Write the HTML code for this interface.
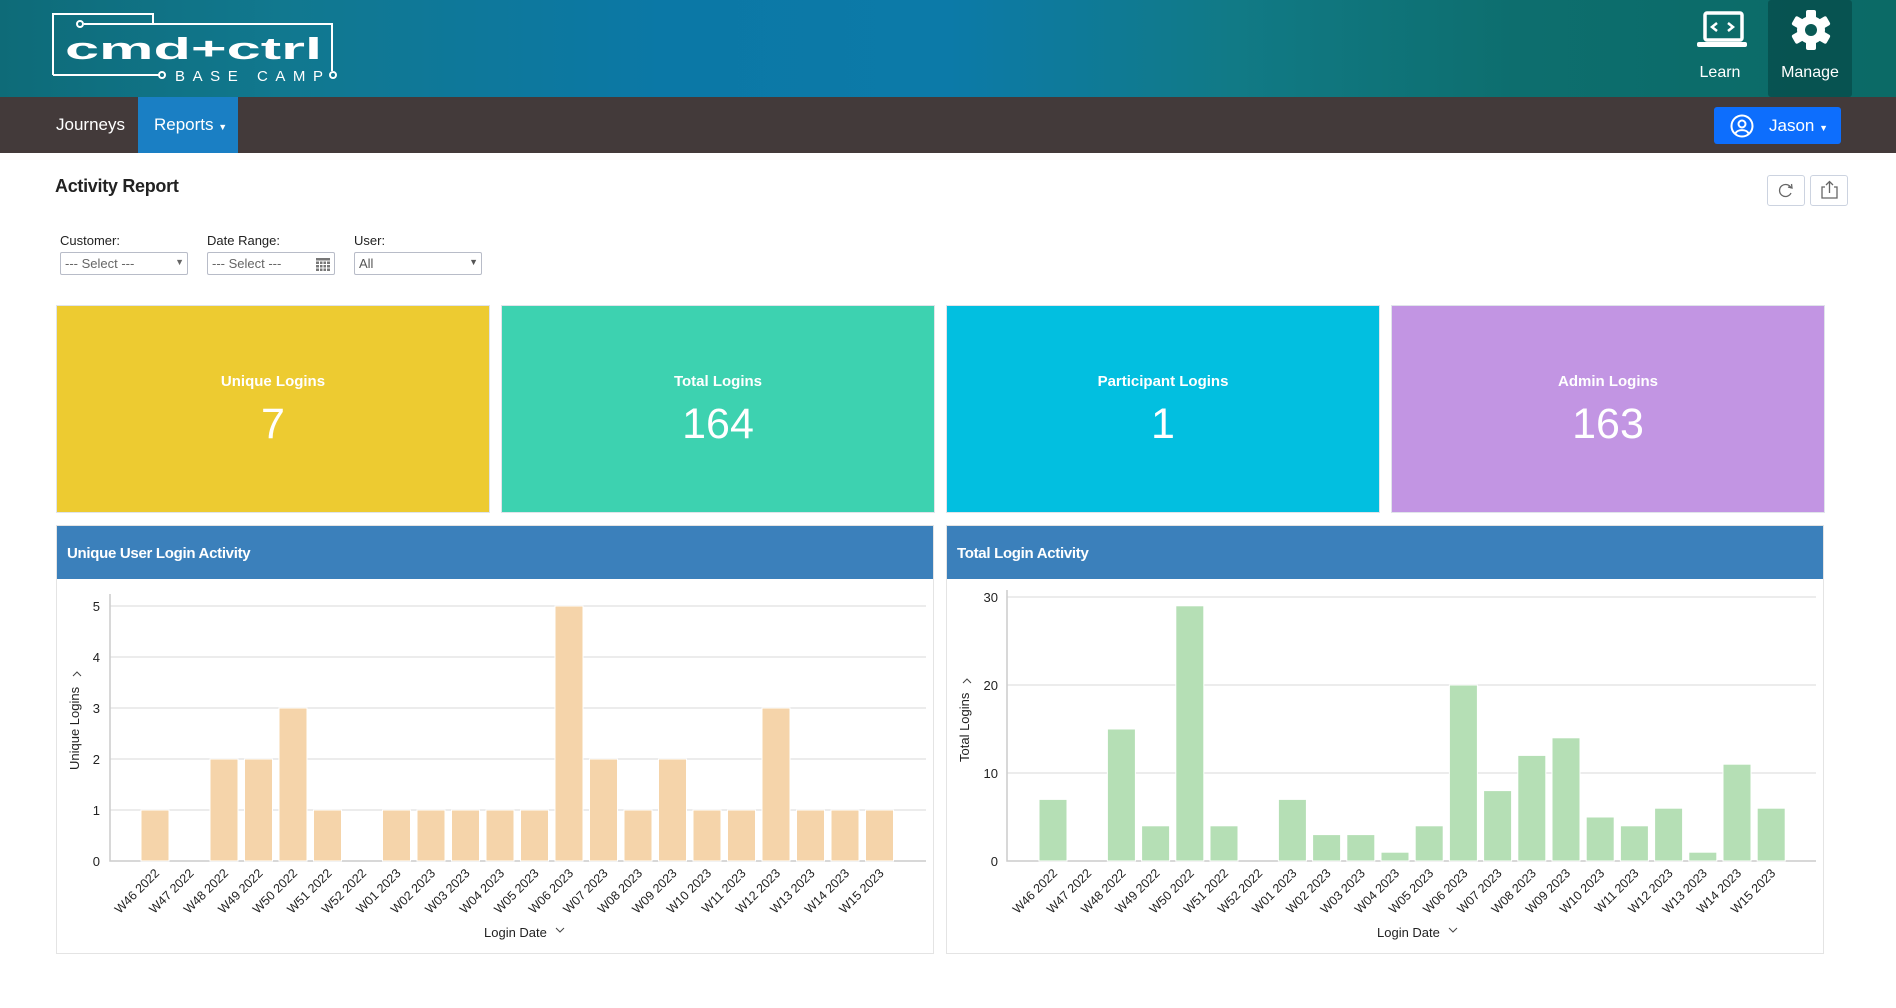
<!DOCTYPE html>
<html><head><meta charset="utf-8"><style>
*{margin:0;padding:0;box-sizing:border-box}
body{width:1896px;height:1008px;overflow:hidden;background:#fff;font-family:"Liberation Sans",sans-serif;position:relative;color:#222}
.abs{position:absolute}
#hdr{left:0;top:0;width:1896px;height:97px;background:linear-gradient(90deg,#0e6b78 0%,#11788f 15%,#0b78a6 35%,#0c7aa8 50%,#117a86 65%,#0d6e6e 80%,#0b6a66 100%)}
#nav{left:0;top:97px;width:1896px;height:56px;background:#433a3a}
.navt{color:#fff;font-size:17px;top:115px}
.card{top:305px;height:208px;width:434px;color:#fff;text-align:center;border:1px solid #e0e4ea}
.card .t{font-size:15px;font-weight:bold;margin-top:67px}
.card .n{font-size:43px;margin-top:10px}
.panel{top:525px;height:429px;width:878px;border:1px solid #e4e4e4}
.panel .h{height:53px;background:#3b80bb;color:#fff;font-weight:bold;font-size:15px;padding:19px 10px;letter-spacing:-0.3px}
.lbl{font-size:13px;color:#222;top:233px}
.sel{top:252px;height:23px;width:95px;border:1px solid #b8bcc8;border-radius:2px;font-size:13px;color:#666;padding:3px 4px}
</style></head><body>
<div id="hdr" class="abs"></div>
<div class="abs" style="left:1768px;top:0;width:84px;height:97px;background:rgba(0,40,40,0.35);border-radius:3px"></div>
<svg class="abs" style="left:0;top:0" width="1896" height="97">
<g fill="none" stroke="#fff" stroke-width="2">
<path d="M53 75 V14 H153 V24"/>
<path d="M84 24 H332 V71"/>
<circle cx="80" cy="24" r="3"/>
<path d="M53 75 H159"/><circle cx="162" cy="75" r="3"/>
<circle cx="333" cy="75" r="3"/>
</g>
<text x="65" y="59" fill="#fff" font-size="31" font-family="Liberation Sans" font-weight="bold" textLength="257" lengthAdjust="spacingAndGlyphs">cmd+ctrl</text>
<text x="175" y="81" fill="#fff" font-size="15" font-family="Liberation Sans" textLength="148" lengthAdjust="spacing">BASE CAMP</text>
<g fill="none" stroke="#fff" stroke-width="3.5"><rect x="1705" y="13" width="37" height="27" rx="2"/></g>
<rect x="1697" y="42" width="50" height="5" rx="2" fill="#fff"/>
<path d="M1717 23 l-5 4 5 4 M1728 23 l5 4 -5 4" stroke="#fff" stroke-width="2.5" fill="none"/>
<g transform="translate(1811,30)" fill="#fff">
<circle r="14"/>
<g id="tooth"><rect x="-5" y="-20" width="10" height="10" rx="2"/></g>
<use href="#tooth" transform="rotate(60)"/><use href="#tooth" transform="rotate(120)"/><use href="#tooth" transform="rotate(180)"/><use href="#tooth" transform="rotate(240)"/><use href="#tooth" transform="rotate(300)"/>
<circle r="6" fill="#0a5a55"/>
</g>
<text x="1720" y="77" fill="#fff" font-size="16" text-anchor="middle" font-family="Liberation Sans">Learn</text>
<text x="1810" y="77" fill="#fff" font-size="16" text-anchor="middle" font-family="Liberation Sans">Manage</text>
</svg>
<div id="nav" class="abs"></div>
<div class="abs" style="left:138px;top:97px;width:100px;height:56px;background:#1a7fc4"></div>
<div class="abs navt" style="left:56px">Journeys</div>
<div class="abs navt" style="left:154px">Reports <span style="font-size:9px">▼</span></div>
<div class="abs" style="left:1714px;top:107px;width:127px;height:37px;background:#0d6efd;border-radius:3px;color:#fff;font-size:17px">
<svg class="abs" style="left:16px;top:7px" width="24" height="24"><circle cx="12" cy="12" r="10.5" fill="none" stroke="#fff" stroke-width="2"/><circle cx="12" cy="10" r="3.5" fill="none" stroke="#fff" stroke-width="2"/><path d="M5.5 19.5 C7 15 17 15 18.5 19.5" fill="none" stroke="#fff" stroke-width="2"/></svg>
<span class="abs" style="left:55px;top:9px">Jason <span style="font-size:9px">▼</span></span></div>
<div class="abs" style="left:55px;top:176px;font-size:18px;font-weight:bold;letter-spacing:-0.3px">Activity Report</div>
<div class="abs" style="left:1767px;top:175px;width:38px;height:31px;border:1px solid #ccd3e0;border-radius:3px"><svg width="36" height="29"><path d="M23 12 A6 6 0 1 0 23 17" fill="none" stroke="#666" stroke-width="1.3"/><path d="M20 11 L24 12 L23.5 8" fill="none" stroke="#666" stroke-width="1.3"/></svg></div>
<div class="abs" style="left:1810px;top:175px;width:38px;height:31px;border:1px solid #ccd3e0;border-radius:3px"><svg width="36" height="29"><path d="M14 11 H11 V22 H26 V11 H23 M18.5 17 V6 M15 9 L18.5 5.5 L22 9" fill="none" stroke="#666" stroke-width="1.3"/></svg></div>
<div class="abs lbl" style="left:60px">Customer:</div>
<div class="abs lbl" style="left:207px">Date Range:</div>
<div class="abs lbl" style="left:354px">User:</div>
<div class="abs sel" style="left:60px;width:128px">--- Select ---<span class="abs" style="right:3px;top:4px;font-size:9px">▼</span></div>
<div class="abs sel" style="left:207px;width:128px">--- Select ---<svg class="abs" style="right:4px;top:3px" width="14" height="15"><rect x="0" y="2" width="14" height="13" fill="#777"/><path d="M0 5H14M3.5 5V15M7 5V15M10.5 5V15M0 8.5H14M0 12H14" stroke="#fff" stroke-width="1"/></svg></div>
<div class="abs sel" style="left:354px;width:128px;color:#555">All<span class="abs" style="right:3px;top:4px;font-size:9px">▼</span></div>
<div class="abs card" style="left:56px;background:#edcb31"><div class="t">Unique Logins</div><div class="n">7</div></div>
<div class="abs card" style="left:501px;background:#3dd2b0"><div class="t">Total Logins</div><div class="n">164</div></div>
<div class="abs card" style="left:946px;background:#02bfe0"><div class="t">Participant Logins</div><div class="n">1</div></div>
<div class="abs card" style="left:1391px;background:#c295e3"><div class="t">Admin Logins</div><div class="n">163</div></div>
<div class="abs panel" style="left:56px"><div class="h">Unique User Login Activity</div></div>
<div class="abs panel" style="left:946px"><div class="h">Total Login Activity</div></div>
<svg class="abs" style="left:0;top:0" width="1896" height="1008" font-family="Liberation Sans">
<g stroke="#e6e6e6" stroke-width="1.5" fill="none">
<path d="M110 606H926M110 657H926M110 708H926M110 759H926M110 810H926"/>
<path d="M1007 597H1816M1007 685H1816M1007 773H1816"/>
</g>
<g stroke="#ccc" stroke-width="1.5" fill="none"><path d="M110 594V861H926M1007 590V861H1816"/></g>
<g font-size="13" fill="#222" text-anchor="end">
<text x="100" y="611">5</text><text x="100" y="662">4</text><text x="100" y="713">3</text><text x="100" y="764">2</text><text x="100" y="815">1</text><text x="100" y="866">0</text>
<text x="998" y="602">30</text><text x="998" y="690">20</text><text x="998" y="778">10</text><text x="998" y="866">0</text>
</g>
<g transform="translate(0,861) scale(1,-1)" fill="#f5d4aa" stroke="#fff">
<rect x="141" width="28" height="51"/><rect x="210" width="28" height="102"/><rect x="244.5" width="28" height="102"/><rect x="279" width="28" height="153"/><rect x="313.5" width="28" height="51"/><rect x="382.5" width="28" height="51"/><rect x="417" width="28" height="51"/><rect x="451.5" width="28" height="51"/><rect x="486" width="28" height="51"/><rect x="520.5" width="28" height="51"/><rect x="555" width="28" height="255"/><rect x="589.5" width="28" height="102"/><rect x="624" width="28" height="51"/><rect x="658.5" width="28" height="102"/><rect x="693" width="28" height="51"/><rect x="727.5" width="28" height="51"/><rect x="762" width="28" height="153"/><rect x="796.5" width="28" height="51"/><rect x="831" width="28" height="51"/><rect x="865.5" width="28" height="51"/>
</g>
<g transform="translate(0,861) scale(1,-1)" fill="#b5dfb5" stroke="#fff">
<rect x="1039" width="28" height="61.6"/><rect x="1107.4" width="28" height="132"/><rect x="1141.6" width="28" height="35.2"/><rect x="1175.8" width="28" height="255.2"/><rect x="1210" width="28" height="35.2"/><rect x="1278.4" width="28" height="61.6"/><rect x="1312.6" width="28" height="26.4"/><rect x="1346.8" width="28" height="26.4"/><rect x="1381" width="28" height="8.8"/><rect x="1415.2" width="28" height="35.2"/><rect x="1449.4" width="28" height="176"/><rect x="1483.6" width="28" height="70.4"/><rect x="1517.8" width="28" height="105.6"/><rect x="1552" width="28" height="123.2"/><rect x="1586.2" width="28" height="44"/><rect x="1620.4" width="28" height="35.2"/><rect x="1654.6" width="28" height="52.8"/><rect x="1688.8" width="28" height="8.8"/><rect x="1723" width="28" height="96.8"/><rect x="1757.2" width="28" height="52.8"/>
</g>
<g font-size="12.5" fill="#222" text-anchor="end">
<text transform="translate(160,874) rotate(-45)">W46 2022</text><text transform="translate(194.5,874) rotate(-45)">W47 2022</text><text transform="translate(229,874) rotate(-45)">W48 2022</text><text transform="translate(263.5,874) rotate(-45)">W49 2022</text><text transform="translate(298,874) rotate(-45)">W50 2022</text><text transform="translate(332.5,874) rotate(-45)">W51 2022</text><text transform="translate(367,874) rotate(-45)">W52 2022</text><text transform="translate(401.5,874) rotate(-45)">W01 2023</text><text transform="translate(436,874) rotate(-45)">W02 2023</text><text transform="translate(470.5,874) rotate(-45)">W03 2023</text><text transform="translate(505,874) rotate(-45)">W04 2023</text><text transform="translate(539.5,874) rotate(-45)">W05 2023</text><text transform="translate(574,874) rotate(-45)">W06 2023</text><text transform="translate(608.5,874) rotate(-45)">W07 2023</text><text transform="translate(643,874) rotate(-45)">W08 2023</text><text transform="translate(677.5,874) rotate(-45)">W09 2023</text><text transform="translate(712,874) rotate(-45)">W10 2023</text><text transform="translate(746.5,874) rotate(-45)">W11 2023</text><text transform="translate(781,874) rotate(-45)">W12 2023</text><text transform="translate(815.5,874) rotate(-45)">W13 2023</text><text transform="translate(850,874) rotate(-45)">W14 2023</text><text transform="translate(884.5,874) rotate(-45)">W15 2023</text>
<text transform="translate(1058,874) rotate(-45)">W46 2022</text><text transform="translate(1092.2,874) rotate(-45)">W47 2022</text><text transform="translate(1126.4,874) rotate(-45)">W48 2022</text><text transform="translate(1160.6,874) rotate(-45)">W49 2022</text><text transform="translate(1194.8,874) rotate(-45)">W50 2022</text><text transform="translate(1229,874) rotate(-45)">W51 2022</text><text transform="translate(1263.2,874) rotate(-45)">W52 2022</text><text transform="translate(1297.4,874) rotate(-45)">W01 2023</text><text transform="translate(1331.6,874) rotate(-45)">W02 2023</text><text transform="translate(1365.8,874) rotate(-45)">W03 2023</text><text transform="translate(1400,874) rotate(-45)">W04 2023</text><text transform="translate(1434.2,874) rotate(-45)">W05 2023</text><text transform="translate(1468.4,874) rotate(-45)">W06 2023</text><text transform="translate(1502.6,874) rotate(-45)">W07 2023</text><text transform="translate(1536.8,874) rotate(-45)">W08 2023</text><text transform="translate(1571,874) rotate(-45)">W09 2023</text><text transform="translate(1605.2,874) rotate(-45)">W10 2023</text><text transform="translate(1639.4,874) rotate(-45)">W11 2023</text><text transform="translate(1673.6,874) rotate(-45)">W12 2023</text><text transform="translate(1707.8,874) rotate(-45)">W13 2023</text><text transform="translate(1742,874) rotate(-45)">W14 2023</text><text transform="translate(1776.2,874) rotate(-45)">W15 2023</text>
</g>
<g font-size="13" fill="#222">
<text x="484" y="937">Login Date</text><path d="M556 928 l4 4 4 -4" stroke="#444" fill="none"/>
<text x="1377" y="937">Login Date</text><path d="M1449 928 l4 4 4 -4" stroke="#444" fill="none"/>
<text transform="translate(79,770) rotate(-90)">Unique Logins</text><path d="M73 668 l4 4 -4 4" stroke="#444" fill="none" transform="rotate(-90 77 672)"/>
<text transform="translate(969,762) rotate(-90)">Total Logins</text><path d="M963 675 l4 4 -4 4" stroke="#444" fill="none" transform="rotate(-90 967 679)"/>
</g>
</svg>
</body></html>
